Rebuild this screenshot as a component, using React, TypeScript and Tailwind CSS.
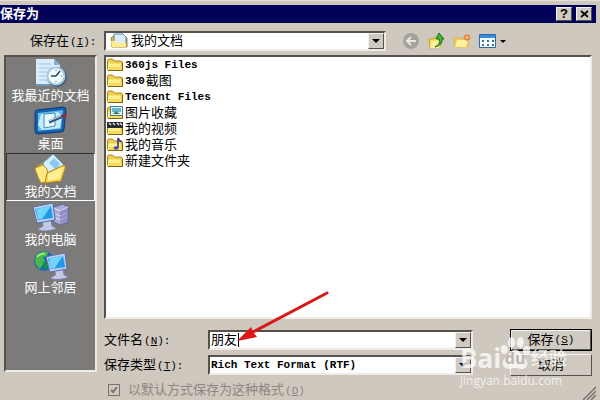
import { useState, type ReactNode } from 'react';

const raised = 'border border-t-[#f4f2ee] border-l-[#f4f2ee] border-r-[#55524e] border-b-[#55524e] bg-[#d0cac1]';
const sunken = 'border-2 border-t-[#55524e] border-l-[#55524e] border-r-[#efece7] border-b-[#efece7] bg-white';

function Key({ k, colon = true }: { k: string; colon?: boolean }) {
  return (
    <span className="ml-px font-['Liberation_Mono',monospace] text-[11px]">
      (<u>{k}</u>){colon && ':'}
    </span>
  );
}

function Arrow() {
  return (
    <span className={`flex w-4 items-center justify-center ${raised}`}>
      <svg width="8" height="4" viewBox="0 0 8 4"><path d="M0 0h8L4 4z" /></svg>
    </span>
  );
}

function Folder({ children }: { children?: ReactNode }) {
  return (
    <svg width="18" height="16" viewBox="0 0 18 16" className="shrink-0">
      <path d="M1.5 4q0-2 2-2h3l2 2h6q2 0 2 2v7.500h-13q-2 0-2-2z" fill="#f1cf4e" stroke="#a98216" />
      <path d="M2 6.500h12.500v6.500H3.500q-1.500 0-1.500-1.500z" fill="#fff08e" />
      <path d="M3 10h11v3H3z" fill="#f8dc60" />
      <path d="M2 13.500h14.500V6" fill="none" stroke="#80620f" />
      {children}
    </svg>
  );
}

function PictureFolder() {
  return (
    <Folder>
      <path d="M4.500 1.500h12v9h-12z" fill="#e6f7fb" stroke="#437e96" />
      <path d="M6 3h9v4H6z" fill="#65b7d0" />
      <path d="M7 9l3-3 4 3z" fill="#387c65" />
    </Folder>
  );
}

function VideoFolder() {
  return (
    <Folder>
      <path d="M1 1h16v6H1z" fill="#242a2d" />
      <path d="M3 2l2 2M7 2l2 2M11 2l2 2M14 2l2 2" stroke="#dce2df" strokeWidth="1.500" />
    </Folder>
  );
}

function MusicFolder() {
  return (
    <Folder>
      <path d="M12 11V1q1 3 4 4" fill="none" stroke="#39368c" strokeWidth="1.600" />
      <ellipse cx="10" cy="11" rx="2.500" ry="1.700" fill="#504ca9" />
    </Folder>
  );
}

function RecentIcon() {
  return (
    <svg width="34" height="30" viewBox="0 0 34 30">
      <path d="M2 1h18l6 6v20H2z" fill="#d9ecfc" />
      <path d="M20 1v6h6z" fill="#7caee0" />
      <path d="M5 6h12M5 10h14M5 14h10M5 18h8M5 22h9" stroke="#9fc4ea" />
      <path d="M2 27h22" stroke="#6e94c0" strokeWidth="2" />
      <circle cx="23" cy="19" r="10" fill="#415a78" />
      <circle cx="22" cy="18" r="9.500" fill="#a9cbdc" />
      <circle cx="22" cy="18" r="7.500" fill="#f1fafc" />
      <path d="M22 18l4-5M22 18h-5" stroke="#24456c" strokeWidth="1.500" />
      <path d="M22 12v1M22 23v1M27 18h1" stroke="#457092" />
    </svg>
  );
}

function DesktopIcon() {
  return (
    <svg width="34" height="30" viewBox="0 0 34 30">
      <path d="M3 4L29 1q3 0 3 3l-2 19q0 3-3 3L4 28q-3 0-3-3l0-18q0-3 2-3z" fill="#1761ac" stroke="#0c3a78" />
      <path d="M4 7L29 4l-2 19L4 25z" fill="#5fb9ed" />
      <path d="M7 8l17-2 4 4-2 12-18 2-4-5z" fill="#c4edfc" />
      <path d="M10 8l11-1v13l-11 2z" fill="#e7f9ff" stroke="#3e88b1" />
      <path d="M15 16l14-6" stroke="#31577c" strokeWidth="3" />
      <path d="M15 15l12-5" stroke="#d6e3ea" />
      <path d="M29 8l4 1-1 3-4-1z" fill="#a82236" />
    </svg>
  );
}

function DocumentsIcon() {
  return (
    <svg width="34" height="30" viewBox="0 0 34 30">
      <path d="M3 12l6-3 5 3 16-2-3 17-20 2z" fill="#d4a42c" />
      <path d="M9 9L19 0l11 11-9 13-8-3z" fill="#d6efff" stroke="#6b9cc2" />
      <path d="M15 9l5-5 6 6-4 6z" fill="#8bc7ee" />
      <path d="M1 15q0-2 3-2l5-2 4 4 2 12-8 2q-3-5-6-14z" fill="#ffea82" stroke="#ba8e25" />
      <path d="M13 19l17-8q2 1 1 4l-4 12-16 2z" fill="#f9d957" stroke="#af841f" />
      <path d="M14 20l15-7-3 11-12 3z" fill="#ffef98" />
    </svg>
  );
}

function Monitor() {
  return (
    <>
      <path d="M9 19l9-1 1 6 4 2q0 2-10 3Q5 29 5 27l5-3z" fill="#c3c8e6" stroke="#777ca8" />
      <path d="M0 5l20-4 2 17L4 21z" fill="#bdcff0" stroke="#576eaa" />
      <path d="M2 7l16-3 2 12L5 18z" fill="#229be6" />
      <path d="M3 7l15-3-9 13H5z" fill="#72d4fb" />
    </>
  );
}

function ComputerIcon() {
  return (
    <svg width="36" height="30" viewBox="0 0 36 30">
      <path d="M21 5l9-3 5 3v15l-8 3-8-4z" fill="#a9aad5" stroke="#6265a0" />
      <path d="M21 6l6 3 8-4M23 12l4 2 7-3M23 16l4 2 7-3" fill="none" stroke="#e7e7fb" />
      <path d="M27 9v13l7-3V6z" fill="#807fb9" fillOpacity="0.6" />
      <Monitor />
    </svg>
  );
}

function NetworkIcon() {
  return (
    <svg width="36" height="30" viewBox="0 0 36 30">
      <circle cx="11" cy="11" r="10" fill="#176aaf" />
      <path d="M3 6q5-6 12-4l-1 4-4 1 2 4-5 8Q0 14 3 6z" fill="#46b949" />
      <path d="M10 12l7 1-5 8z" fill="#188d48" />
      <path d="M4 7q3-4 8-3" fill="none" stroke="#98e57e" strokeWidth="2" />
      <g transform="translate(13 2) scale(.95)"><Monitor /></g>
    </svg>
  );
}

const places = [
  { name: '我最近的文档', icon: <RecentIcon /> },
  { name: '桌面', icon: <DesktopIcon /> },
  { name: '我的文档', icon: <DocumentsIcon /> },
  { name: '我的电脑', icon: <ComputerIcon /> },
  { name: '网上邻居', icon: <NetworkIcon /> },
];

const files = [
  { latin: '360js Files', name: '', icon: <Folder /> },
  { latin: '360', name: '截图', icon: <Folder /> },
  { latin: 'Tencent Files', name: '', icon: <Folder /> },
  { latin: '', name: '图片收藏', icon: <PictureFolder /> },
  { latin: '', name: '我的视频', icon: <VideoFolder /> },
  { latin: '', name: '我的音乐', icon: <MusicFolder /> },
  { latin: '', name: '新建文件夹', icon: <Folder /> },
];

function TitleBar() {
  return (
    <header className="mt-1 mr-1 flex h-[18px] items-center justify-between bg-[#020258] text-white">
      <h1 className="text-[13px] leading-4 font-bold">保存为</h1>
      <div className="flex gap-1 pr-1 text-black">
        <button aria-label="帮助" className={`flex h-[14px] w-4 items-center justify-center text-[13px] font-bold ${raised}`}>
          ?
        </button>
        <button aria-label="关闭" className={`flex h-[14px] w-4 items-center justify-center ${raised}`}>
          <svg width="9" height="8" viewBox="0 0 9 8"><path d="M1 1l7 6M8 1L1 7" stroke="black" strokeWidth="1.700" /></svg>
        </button>
      </div>
    </header>
  );
}

function Toolbar() {
  return (
    <div className="flex w-[206px] shrink-0 items-center gap-2 pl-4">
      <button aria-label="后退">
        <svg width="18" height="18" viewBox="0 0 18 18">
          <circle cx="9" cy="9" r="8" fill="#a5a29e" />
          <path d="M14 9H5M9 5L5 9l4 4" fill="none" stroke="#e8e5e0" strokeWidth="2" />
        </svg>
      </button>
      <button aria-label="向上一级">
        <svg width="17" height="18" viewBox="0 0 17 18">
          <path d="M1 7h5l1-2h4l3 2-2 8-10 1z" fill="#f4dd5b" stroke="#cba52f" />
          <path d="M4 9h10l-3 7H2z" fill="#fff19a" />
          <path d="M7 15q6-3 4-8h-3L11 1l5 6h-2q1 6-7 8z" fill="#3bb72e" stroke="#18711c" />
        </svg>
      </button>
      <button aria-label="新建文件夹">
        <svg width="18" height="18" viewBox="0 0 18 18">
          <path d="M1 6h5l2 1h7v8H2z" fill="#f0cb58" stroke="#e5b94a" />
          <path d="M4 8h11l-2 7H2z" fill="#fff09a" />
          <path d="M14 2v7M10.500 5.500h7M11.500 3l5 5M16.500 3l-5 5" stroke="#ed823e" strokeWidth="1.500" />
          <circle cx="14" cy="5.500" r="1" fill="#fff0b0" />
        </svg>
      </button>
      <button aria-label="视图" className="flex items-center gap-1">
        <svg width="17" height="14" viewBox="0 0 17 14">
          <path d="M.5.5h16v13H.5z" fill="#f4f9fc" stroke="#2868aa" />
          <path d="M1 1h15v3H1z" fill="#3b8cd4" />
          <path d="M3 6h2v2H3zM8 6h2v2H8zM13 6h2v2h-2zM3 10h2v2H3zM8 10h2v2H8zM13 10h2v2h-2z" fill="#3e7590" />
        </svg>
        <svg width="6" height="3" viewBox="0 0 6 3"><path d="M0 0h6L3 3z" /></svg>
      </button>
    </div>
  );
}

function Watermark() {
  return (
    <div className="pointer-events-none absolute top-[342px] left-[460px] font-['Open_Sans','Noto_Sans_CJK_SC',sans-serif] text-white/75">
      <div className="flex h-[30px] items-center">
        <span className="text-[26px] leading-[30px] font-bold">Bai</span>
        <span className="relative flex h-[30px] w-7 items-center justify-center">
          <svg width="32" height="36" viewBox="0 0 36 38" className="absolute -top-2 -left-0.5" fill="currentColor">
            <ellipse cx="6" cy="15" rx="4" ry="5" />
            <ellipse cx="14" cy="7" rx="4" ry="6" />
            <ellipse cx="24" cy="7" rx="4" ry="6" />
            <ellipse cx="31" cy="16" rx="4" ry="5" />
            <path d="M18 15q5 0 8 7 7 6 6 10-2 6-8 5-6-2-12 0-8 0-8-7 0-4 6-8 4-7 8-7z" />
          </svg>
          <span className="relative text-[16px] leading-[30px] font-bold text-[#bcb6ad]">du</span>
        </span>
        <span className="ml-0.5 text-[18px] leading-[30px] font-medium">经验</span>
      </div>
      <p className="text-[12px] leading-4">jingyan.baidu.com</p>
    </div>
  );
}

export default function App() {
  const [place, setPlace] = useState(2);
  const [fileName, setFileName] = useState('朋友');

  return (
    <div className="relative flex min-h-screen w-full flex-col overflow-hidden border-t border-[#e3dfd9] bg-[#cfc8be] font-['Liberation_Sans','Noto_Sans_CJK_SC',sans-serif] text-[13px] leading-4 text-black">
      <TitleBar />

      <div className="flex items-center pt-2 pr-2">
        <label htmlFor="folder" className="w-[104px] shrink-0 pl-[30px] whitespace-nowrap">
          保存在<Key k="I" />
        </label>
        <div className={`relative flex h-5 min-w-0 flex-1 ${sunken}`}>
          <svg width="18" height="16" viewBox="0 0 18 16" className="pointer-events-none absolute top-0 left-1">
            <path d="M1 5l4-3h7l5 3v9H2z" fill="#e7bd43" stroke="#a98225" />
            <path d="M4 1h9l3 3v9H4z" fill="#dceefa" stroke="#578aac" />
            <path d="M1 8h4l1 2h10v4H2z" fill="#ffeb8a" />
          </svg>
          <select id="folder" className="min-w-0 flex-1 appearance-none pl-[25px] leading-4 outline-none">
            <option>我的文档</option>
          </select>
          <Arrow />
        </div>
        <Toolbar />
      </div>

      <div className="flex flex-1 gap-[7px] pt-1 pr-2 pl-1">
        <nav className="mb-7 w-[93px] shrink-0 border-2 border-t-[#55524e] border-l-[#55524e] border-r-[#efece7] border-b-[#efece7] bg-[#7c7b7a] text-white">
          {places.map((p, i) => (
            <button
              key={p.name}
              onClick={() => setPlace(i)}
              className={`flex h-12 w-full flex-col items-center border whitespace-nowrap ${
                i === place ? 'border-t-[#333] border-l-[#333] border-r-white border-b-white' : 'border-transparent'
              }`}
            >
              {p.icon}
              <span>{p.name}</span>
            </button>
          ))}
        </nav>

        <main className="flex min-w-0 flex-1 flex-col">
          <ul className={`min-h-[200px] flex-1 ${sunken}`}>
            {files.map((f) => (
              <li key={f.latin + f.name}>
                <button className="flex h-4 items-center gap-px">
                  {f.icon}
                  {f.latin && <span className="font-['Liberation_Mono',monospace] text-[11px] font-bold">{f.latin}</span>}
                  {f.name && <span>{f.name}</span>}
                </button>
              </li>
            ))}
          </ul>

          <div className="grid grid-cols-[104px_1fr_82px] items-center gap-y-[3px] pt-2.5">
            <label htmlFor="filename">文件名<Key k="N" /></label>
            <div className={`relative mr-[37px] flex h-5 min-w-0 ${sunken}`}>
              <input
                id="filename"
                value={fileName}
                onChange={(e) => setFileName(e.target.value)}
                className="min-w-0 flex-1 pl-px outline-none"
              />
              <span className="pointer-events-none absolute top-px left-7 h-[14px] w-px bg-black" />
              <Arrow />
            </div>
            <button className="h-[22px] border border-black">
              <span className={`flex h-5 items-center justify-center ${raised}`}>
                保存<Key k="S" colon={false} />
              </span>
            </button>

            <label htmlFor="type">保存类型<Key k="T" /></label>
            <div className={`mr-[37px] flex h-5 min-w-0 ${sunken}`}>
              <select
                id="type"
                className="min-w-0 flex-1 appearance-none pl-px font-['Liberation_Mono',monospace] text-[11px] leading-4 font-bold outline-none"
              >
                <option>Rich Text Format (RTF)</option>
              </select>
              <Arrow />
            </div>
            <button className={`h-[22px] ${raised}`}>取消</button>
          </div>

          <label className="flex h-6 items-center gap-2 pt-1 pl-1 text-[#8c8780]">
            <span className="relative h-3 w-3">
              <input type="checkbox" defaultChecked disabled className="block h-3 w-3 appearance-none border border-[#77736d]" />
              <svg width="12" height="12" viewBox="0 0 12 12" className="absolute inset-0">
                <path d="M3 6l2 2 4-5" fill="none" stroke="#77736d" strokeWidth="2" />
              </svg>
            </span>
            <span>以默认方式保存为这种格式<Key k="D" colon={false} /></span>
          </label>
        </main>
      </div>

      <svg width="14" height="14" viewBox="0 0 14 14" className="absolute right-1 bottom-0">
        <path d="M1 14L14 1M5 14l9-9M9 14l5-5" stroke="#77736d" strokeWidth="1.500" />
      </svg>

      <svg width="94" height="54" viewBox="0 0 94 54" className="pointer-events-none absolute top-[289px] left-[236px]">
        <path d="M91 3L17 42" stroke="#d61a1a" strokeWidth="3" strokeLinecap="round" />
        <path d="M1 51l14-14 2 5 4 5z" fill="#e01515" />
      </svg>

      <Watermark />
    </div>
  );
}
